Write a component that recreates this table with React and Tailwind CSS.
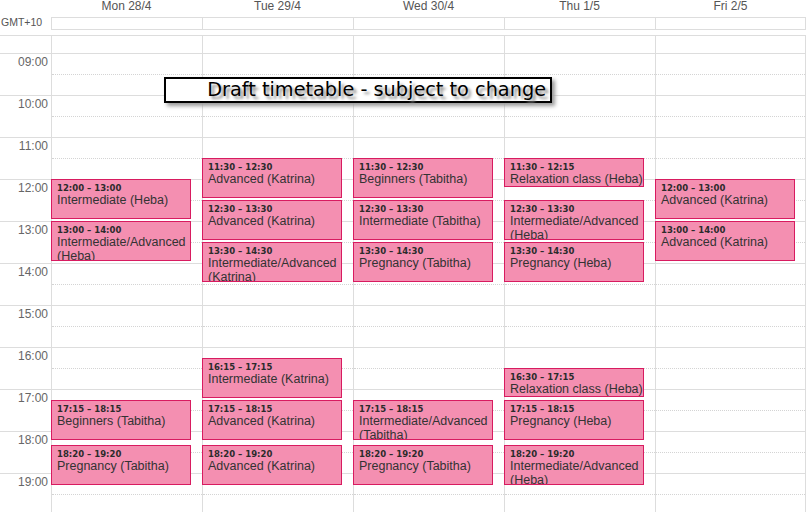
const days = ["Mon 28/4", "Tue 29/4", "Wed 30/4", "Thu 1/5", "Fri 2/5"];
const hours = ["09", "10", "11", "12", "13", "14", "15", "16", "17", "18", "19"];

const events = [
    [
        ["12:00", "13:00", "Intermediate (Heba)"],
        ["13:00", "14:00", "Intermediate/Advanced (Heba)"],
        ["17:15", "18:15", "Beginners (Tabitha)"],
        ["18:20", "19:20", "Pregnancy (Tabitha)"],
    ],
    [
        ["11:30", "12:30", "Advanced (Katrina)"],
        ["12:30", "13:30", "Advanced (Katrina)"],
        ["13:30", "14:30", "Intermediate/Advanced (Katrina)"],
        ["16:15", "17:15", "Intermediate (Katrina)"],
        ["17:15", "18:15", "Advanced (Katrina)"],
        ["18:20", "19:20", "Advanced (Katrina)"],
    ],
    [
        ["11:30", "12:30", "Beginners (Tabitha)"],
        ["12:30", "13:30", "Intermediate (Tabitha)"],
        ["13:30", "14:30", "Pregnancy (Tabitha)"],
        ["17:15", "18:15", "Intermediate/Advanced (Tabitha)"],
        ["18:20", "19:20", "Pregnancy (Tabitha)"],
    ],
    [
        ["11:30", "12:15", "Relaxation class (Heba)"],
        ["12:30", "13:30", "Intermediate/Advanced (Heba)"],
        ["13:30", "14:30", "Pregnancy (Heba)"],
        ["16:30", "17:15", "Relaxation class (Heba)"],
        ["17:15", "18:15", "Pregnancy (Heba)"],
        ["18:20", "19:20", "Intermediate/Advanced (Heba)"],
    ],
    [
        ["12:00", "13:00", "Advanced (Katrina)"],
        ["13:00", "14:00", "Advanced (Katrina)"],
    ],
];

const toMin = (t) => {
    const [h, m] = t.split(":").map(Number);
    return h * 60 + m;
};

// 42px per hour, column content starts 17px above 09:00
const Event = ({ ev }) => {
    const [start, end, title] = ev;
    const s = toMin(start);
    const e = toMin(end);
    const top = Math.round(17 + (s - 540) * 0.7);
    const height = Math.round((e - s) * 0.7 - 2);
    return (
        <div
            className="absolute left-[-1px] w-[140px] overflow-hidden border border-[#d81b60] bg-[#f48fb1] pl-[5px] pt-[4px] text-[#333]"
            style={{ top, height }}
        >
            <div className="font-['DejaVu_Sans',sans-serif] text-[8.5px] font-bold leading-[9px] text-[#2b2b2b]">
                {start} – {end}
            </div>
            <div className="text-[12.5px] leading-[14px]">{title}</div>
        </div>
    );
};

const App = () => {
    return (
        <div className="relative h-[512px] w-[809px] overflow-hidden bg-white font-['Liberation_Sans',Arial,sans-serif]">
            {/* day names */}
            <div className="flex h-[17px]">
                <div className="w-[51px]" />
                {days.map((d) => (
                    <div key={d} className="w-[151px] text-center text-[12px] leading-[12px] text-[#555]">
                        {d}
                    </div>
                ))}
            </div>

            {/* all-day row */}
            <div className="flex h-[13px]">
                <div className="w-[51px] pl-[1px] text-[10.5px] leading-[11px] text-[#555]">GMT+10</div>
                <div className="flex w-[755px] border-y border-r border-[#ddd]">
                    <div className="h-full w-[151px] border-l border-[#ddd]" />
                    <div className="h-full w-[151px] border-l border-[#ddd]" />
                    <div className="h-full w-[151px] border-l border-[#ddd]" />
                    <div className="h-full w-[151px] border-l border-[#ddd]" />
                    <div className="h-full w-[150px] border-l border-[#ddd]" />
                </div>
            </div>
            <div className="h-[5px]" />

            {/* time grid */}
            <div className="flex w-[806px] border-t border-[#ddd]">
                <div className="w-[51px]">
                    <div className="h-[17px]" />
                    {hours.map((h) => (
                        <div
                            key={h}
                            className="h-[42px] border-t border-[#ddd] pr-[3px] pt-[1px] text-right text-[12px] leading-[14px] text-[#666]"
                        >
                            {h}:00
                        </div>
                    ))}
                </div>
                {events.map((list, i) => (
                    <div
                        key={i}
                        className={
                            i === 4
                                ? "relative w-[151px] border-x border-[#ddd]"
                                : "relative w-[151px] border-l border-[#ddd]"
                        }
                    >
                        <div className="h-[17px]" />
                        {hours.map((h) => (
                            <div key={h} className="h-[42px] border-t border-[#ddd]">
                                <div className="h-[21px] border-b border-dotted border-[#d4d4d4]" />
                            </div>
                        ))}
                        {list.map((ev) => (
                            <Event key={ev[0]} ev={ev} />
                        ))}
                    </div>
                ))}
            </div>

            {/* banner */}
            <div className="absolute left-[164px] top-[77px] h-[26px] w-[388px] border-2 border-black bg-white pr-[4px] text-right font-['DejaVu_Sans',Verdana,sans-serif] text-[19.3px] leading-[22px] text-black shadow-[3px_3px_4px_#999] [text-shadow:3px_3px_3px_#888]">
                Draft timetable - subject to change
            </div>
        </div>
    );
};

export default App;
